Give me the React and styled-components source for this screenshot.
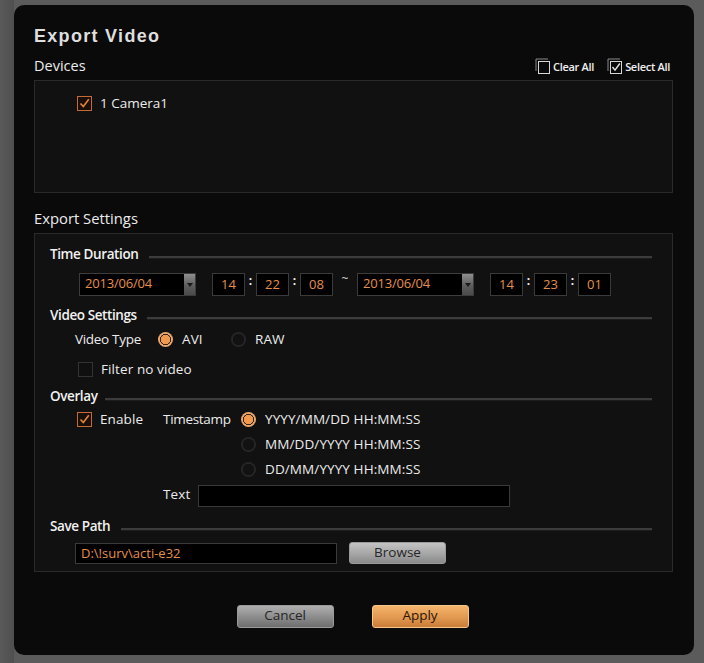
import React from "react";
import styled, { createGlobalStyle } from "styled-components";

const GlobalStyle = createGlobalStyle`
  html, body {
    margin: 0;
    padding: 0;
    background: #575757;
  }
  body {
    font-family: "Open Sans", "Noto Sans", sans-serif;
    color: #e6e6e6;
  }
`;

const ORANGE_TEXT = "#e58f4a";

const Page = styled.div`
  width: 704px;
  height: 663px;
  box-sizing: border-box;
  padding: 5px 10px 8px 14px;
  background: linear-gradient(90deg, #5a5a5a 0, #4f4f4f 14px, #5b5b5b 14px);
`;

const Dialog = styled.div`
  width: 680px;
  height: 650px;
  box-sizing: border-box;
  background: #0a0a0a;
  border-radius: 10px;
  padding: 20px 21px 0 20px;
  display: flex;
  flex-direction: column;
`;

const Title = styled.h1`
  margin: 0;
  height: 22px;
  font-family: "Liberation Sans", Arial, sans-serif;
  font-weight: bold;
  font-size: 18px;
  line-height: 22px;
  letter-spacing: 1.3px;
  color: #dedede;
`;

const HeaderRow = styled.div`
  display: flex;
  align-items: center;
  height: 18px;
  margin-top: ${(p) => p.$mt || 0}px;
`;

const Label = styled.div`
  font-size: ${(p) => p.$size || 13.5}px;
  line-height: 18px;
  color: #ececec;
  white-space: nowrap;
`;

const Spacer = styled.div`
  flex: 1;
`;

const AllToggle = styled.div`
  display: flex;
  align-items: center;
  gap: 3px;
  margin-left: ${(p) => p.$ml || 0}px;
  font-size: 11px;
  font-weight: 600;
  letter-spacing: -0.3px;
  color: #f0f0f0;
  svg {
    display: block;
  }
`;

const Panel = styled.div`
  box-sizing: border-box;
  height: ${(p) => p.$h}px;
  margin-top: ${(p) => p.$mt}px;
  background: #111111;
  border: 1px solid #2a2a2a;
  padding: ${(p) => p.$pad};
  display: flex;
  flex-direction: column;
`;

const CheckRow = styled.div`
  display: flex;
  align-items: center;
  gap: 8px;
  height: 18px;
  margin-top: ${(p) => p.$mt || 0}px;
  margin-left: ${(p) => p.$ml || 0}px;
`;

const Box = styled.div`
  box-sizing: border-box;
  width: 15px;
  height: 15px;
  border: 1px solid ${(p) => (p.$checked ? "#c56a32" : "#333")};
  background: ${(p) => (p.$checked ? "#1a0f08" : "#101010")};
  display: flex;
  align-items: center;
  justify-content: center;
  flex-shrink: 0;
`;

const SectionHead = styled.div`
  display: flex;
  align-items: center;
  height: 18px;
  margin-top: ${(p) => p.$mt}px;
`;

const SectionTitle = styled.div`
  font-size: 13.5px;
  font-weight: 600;
  line-height: 18px;
  letter-spacing: -0.4px;
  color: #f2f2f2;
  white-space: nowrap;
`;

const Rule = styled.div`
  flex: 1;
  height: 2px;
  margin-left: ${(p) => p.$gap || 10}px;
  margin-top: 7px;
  background: #3c3c3c;
  border-bottom: 1px solid #1c1c1c;
`;

const Row = styled.div`
  display: flex;
  align-items: center;
  height: ${(p) => p.$h || 18}px;
  margin-top: ${(p) => p.$mt || 0}px;
  margin-left: ${(p) => p.$ml || 0}px;
`;

const DateField = styled.div`
  box-sizing: border-box;
  width: 117px;
  height: 23px;
  display: flex;
  background: #000;
  border: 1px solid #3c3c3c;
  margin-left: ${(p) => p.$ml || 0}px;
`;

const DateText = styled.div`
  flex: 1;
  color: ${ORANGE_TEXT};
  font-size: 13px;
  line-height: 19px;
  padding-left: 5px;
  letter-spacing: -0.2px;
`;

const DropButton = styled.div`
  width: 11px;
  background: linear-gradient(180deg, #8e8e8e 0%, #5e5e5e 55%, #4a4a4a 100%);
  display: flex;
  align-items: center;
  justify-content: center;
  &::after {
    content: "";
    border-left: 3px solid transparent;
    border-right: 3px solid transparent;
    border-top: 4px solid #1a1a1a;
  }
`;

const TimeBox = styled.div`
  box-sizing: border-box;
  width: 33px;
  height: 23px;
  background: #000;
  border: 1px solid #3a3a3a;
  color: ${ORANGE_TEXT};
  font-size: 13px;
  line-height: 21px;
  text-align: center;
  margin-left: ${(p) => p.$ml || 0}px;
`;

const Colon = styled.div`
  width: 11px;
  text-align: center;
  color: #f0f0f0;
  font-size: 12px;
  font-weight: bold;
  line-height: 14px;
  align-self: flex-start;
  margin-top: 1px;
`;

const Tilde = styled.div`
  width: 24px;
  text-align: center;
  color: #cfcfcf;
  font-size: 12px;
  align-self: flex-start;
  line-height: 12px;
`;

const Radio = styled.div`
  box-sizing: border-box;
  width: 15px;
  height: 15px;
  border-radius: 50%;
  margin-left: ${(p) => p.$ml || 0}px;
  margin-right: 9px;
  background: ${(p) =>
    p.$on
      ? "radial-gradient(circle, #f19a4d 0 4.6px, #3a2413 4.8px 5.4px, #e9a770 5.8px)"
      : "radial-gradient(circle, #121212 0 5.5px, #262626 6px)"};
  flex-shrink: 0;
`;

const Text = styled.div`
  font-size: 13.5px;
  line-height: 18px;
  color: #ececec;
  white-space: nowrap;
  letter-spacing: ${(p) => (p.$tight ? "-0.3px" : "0.1px")};
  width: ${(p) => (p.$w ? `${p.$w}px` : "auto")};
`;

const OverlayGrid = styled.div`
  display: grid;
  grid-template-columns: 86px 78px 1fr;
  grid-auto-rows: 18px;
  row-gap: 7px;
  margin-top: 5px;
  margin-left: 27px;
  align-items: center;
`;

const TextLine = styled.div`
  grid-column: 2 / 4;
  display: flex;
  align-items: center;
  height: 23px;
`;

const TextInput = styled.div`
  box-sizing: border-box;
  width: 312px;
  height: 22px;
  margin-left: 10px;
  margin-top: 4px;
  background: #000;
  border: 1px solid #3a3a3a;
`;

const PathInput = styled.div`
  box-sizing: border-box;
  width: 262px;
  height: 21px;
  background: #000;
  border: 1px solid #3a3a3a;
  color: ${ORANGE_TEXT};
  font-size: 13px;
  line-height: 19px;
  padding-left: 5px;
`;

const Button = styled.button`
  box-sizing: border-box;
  width: ${(p) => p.$w || 97}px;
  height: ${(p) => p.$h || 23}px;
  margin-left: ${(p) => p.$ml || 0}px;
  border-radius: 3px;
  border: 1px solid ${(p) => (p.$primary ? "#f7c48a" : "#9a9a9a")};
  background: ${(p) =>
    p.$primary
      ? "linear-gradient(180deg, #f4b46c 0%, #e49b52 50%, #c97d39 100%)"
      : p.$light
      ? "linear-gradient(180deg, #c4c4c4 0%, #a8a8a8 50%, #8a8a8a 100%)"
      : "linear-gradient(180deg, #b0b0b0 0%, #8e8e8e 50%, #6e6e6e 100%)"};
  color: ${(p) => (p.$primary ? "#2a1606" : "#262626")};
  font-family: "Open Sans", "Noto Sans", sans-serif;
  font-size: 13.5px;
  line-height: 18px;
  padding: 0 0 3px;
  cursor: pointer;
`;

const Footer = styled.div`
  display: flex;
  justify-content: center;
  margin-top: 33px;
  padding-right: 2px;
`;

const Check = ({ checked }) => (
  <Box $checked={checked}>
    {checked && (
      <svg width="11" height="11" viewBox="0 0 11 11">
        <path d="M1.5 5.5 L4.3 8.6 L9.8 1.2" fill="none" stroke="#e3843f" strokeWidth="1.6" />
      </svg>
    )}
  </Box>
);

const DoubleBox = ({ checked }) => (
  <svg width="15" height="16" viewBox="0 0 15 16">
    <path d="M1 13 V1 H13" fill="none" stroke="#8a8a8a" strokeWidth="1" />
    <rect x="3.5" y="3.5" width="11" height="12" fill="#0a0a0a" stroke="#d8d8d8" strokeWidth="1" />
    {checked && (
      <path d="M5.5 9 L8 12.2 L12.8 5.5" fill="none" stroke="#e8e8e8" strokeWidth="1.4" />
    )}
  </svg>
);

const DateTime = ({ ml, date, h, m, s }) => (
  <>
    <DateField $ml={ml}>
      <DateText>{date}</DateText>
      <DropButton />
    </DateField>
    <TimeBox $ml={16}>{h}</TimeBox>
    <Colon>:</Colon>
    <TimeBox>{m}</TimeBox>
    <Colon>:</Colon>
    <TimeBox>{s}</TimeBox>
  </>
);

export default function App() {
  return (
    <Page>
      <GlobalStyle />
      <Dialog>
        <Title>Export Video</Title>

        <HeaderRow $mt={10}>
          <Label $size={14.5}>Devices</Label>
          <Spacer />
          <AllToggle>
            <DoubleBox />
            Clear All
          </AllToggle>
          <AllToggle $ml={13}>
            <DoubleBox checked />
            Select All
          </AllToggle>
          <div style={{ width: 3 }} />
        </HeaderRow>

        <Panel $h={113} $mt={5} $pad="13px 0 0 42px">
          <CheckRow>
            <Check checked />
            <Label>1 Camera1</Label>
          </CheckRow>
        </Panel>

        <HeaderRow $mt={16}>
          <Label $size={14.8}>Export Settings</Label>
        </HeaderRow>

        <Panel $h={339} $mt={6} $pad="11px 20px 0 15px">
          <SectionHead $mt={0}>
            <SectionTitle>Time Duration</SectionTitle>
            <Rule $gap={11} />
          </SectionHead>
          <Row $h={23} $mt={10} $ml={29}>
            <DateTime date="2013/06/04" h="14" m="22" s="08" />
            <Tilde>~</Tilde>
            <DateTime date="2013/06/04" h="14" m="23" s="01" />
          </Row>

          <SectionHead $mt={10}>
            <SectionTitle>Video Settings</SectionTitle>
            <Rule $gap={10} />
          </SectionHead>
          <Row $mt={6} $ml={25}>
            <Text $w={83} $tight>Video Type</Text>
            <Radio $on />
            <Text $w={49}>AVI</Text>
            <Radio />
            <Text>RAW</Text>
          </Row>
          <CheckRow $mt={12} $ml={28}>
            <Check />
            <Text>Filter no video</Text>
          </CheckRow>

          <SectionHead $mt={9}>
            <SectionTitle>Overlay</SectionTitle>
            <Rule $gap={8} />
          </SectionHead>
          <OverlayGrid>
            <CheckRow>
              <Check checked />
              <Text>Enable</Text>
            </CheckRow>
            <Text $tight>Timestamp</Text>
            <Row>
              <Radio $on />
              <Text>YYYY/MM/DD HH:MM:SS</Text>
            </Row>
            <Row style={{ gridColumn: 3 }}>
              <Radio />
              <Text>MM/DD/YYYY HH:MM:SS</Text>
            </Row>
            <Row style={{ gridColumn: 3 }}>
              <Radio />
              <Text>DD/MM/YYYY HH:MM:SS</Text>
            </Row>
            <TextLine>
              <Text $w={25}>Text</Text>
              <TextInput />
            </TextLine>
          </OverlayGrid>

          <SectionHead $mt={14}>
            <SectionTitle>Save Path</SectionTitle>
            <Rule $gap={11} />
          </SectionHead>
          <Row $h={22} $mt={7} $ml={25}>
            <PathInput>D:\!surv\acti-e32</PathInput>
            <Button $light $w={97} $h={22} $ml={12}>Browse</Button>
          </Row>
        </Panel>

        <Footer>
          <Button>Cancel</Button>
          <Button $primary $ml={38}>Apply</Button>
        </Footer>
      </Dialog>
    </Page>
  );
}
